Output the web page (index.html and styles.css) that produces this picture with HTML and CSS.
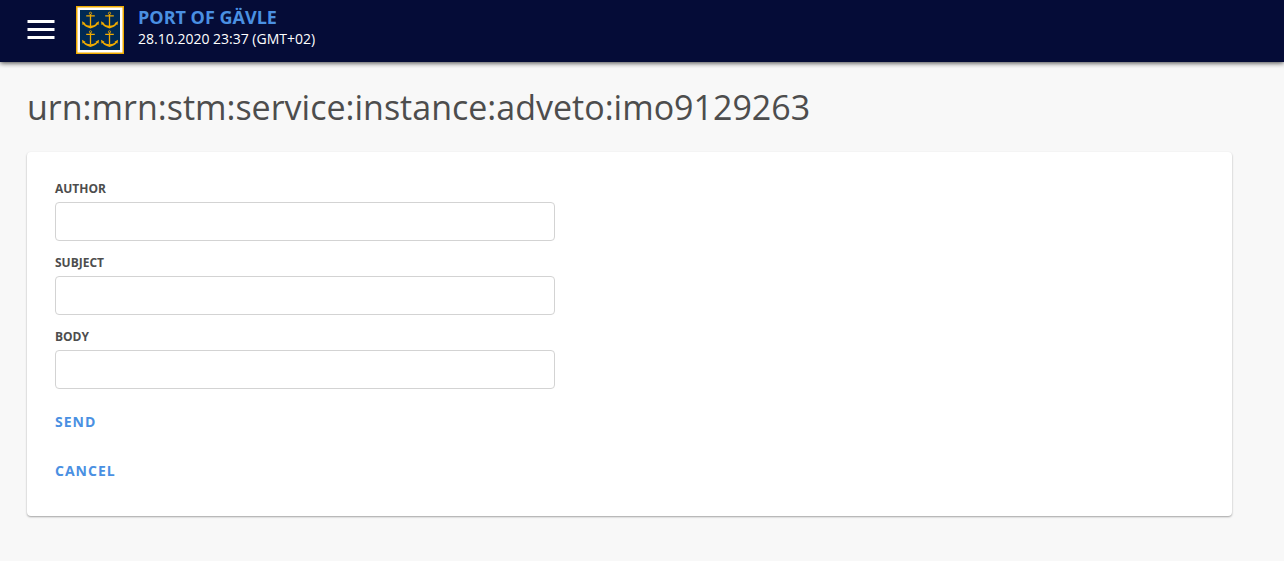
FILE: index.html
```html
<!DOCTYPE html>
<html lang="en">
<head>
<meta charset="utf-8">
<meta name="viewport" content="width=device-width, initial-scale=1">
<title>Port of Gävle</title>
<link rel="stylesheet" href="styles.css">
</head>
<body>
<header class="topbar">
  <button class="menu-button" type="button" aria-label="Menu">
    <svg class="menu-icon" viewBox="0 0 28 20" aria-hidden="true">
      <path d="M0.5 1.5h27M0.5 9.5h27M0.5 17.5h27" stroke="#fff" stroke-width="3" fill="none"/>
    </svg>
  </button>
  <svg class="logo" viewBox="0 0 48 48" aria-hidden="true">
    <defs>
      <g id="anchor">
        <circle cx="9" cy="2.3" r="1.1" fill="none" stroke="#f0ab00" stroke-width="0.8"/>
        <path d="M9 3.2V15M4.7 4.8h8.6" fill="none" stroke="#f0ab00" stroke-width="1.3"/>
        <path d="M0.5 10.2L4 12.2L3.2 12.7C4.6 14 6.5 14.7 9 14.7S13.4 14 14.8 12.7L14 12.2L17.5 10.2L17 14L16 13.5C14.4 15.8 11.5 16.5 9 17.6C6.5 16.5 3.6 15.8 2 13.5L1 14Z" fill="#f0ab00"/>
      </g>
    </defs>
    <rect width="48" height="48" fill="#f0ab00"/>
    <rect x="1.5" y="1.5" width="45" height="45" fill="#fff"/>
    <rect x="4" y="4" width="40" height="40" fill="#002a54"/>
    <use href="#anchor" x="5.5" y="5"/>
    <use href="#anchor" x="24.5" y="5"/>
    <use href="#anchor" x="5.5" y="23.5"/>
    <use href="#anchor" x="24.5" y="23.5"/>
  </svg>
  <div class="brand">
    <span class="brand-name">PORT OF GÄVLE</span>
    <time class="brand-time" datetime="2020-10-28T23:37+02:00">28.10.2020 23:37 (GMT+02)</time>
  </div>
</header>
<main class="page">
  <h1 class="page-title">urn:mrn:stm:service:instance:adveto:imo9129263</h1>
  <form class="card">
    <div class="field">
      <label class="field-label" for="author">AUTHOR</label>
      <input class="field-input" id="author" type="text">
    </div>
    <div class="field">
      <label class="field-label" for="subject">SUBJECT</label>
      <input class="field-input" id="subject" type="text">
    </div>
    <div class="field">
      <label class="field-label" for="body">BODY</label>
      <input class="field-input" id="body" type="text">
    </div>
    <div class="actions">
      <button class="action" type="button">SEND</button>
      <button class="action" type="button">CANCEL</button>
    </div>
  </form>
</main>
</body>
</html>
```

FILE: styles.css
```css
* {
  box-sizing: border-box;
}

body {
  margin: 0;
  background: #f8f8f8;
  color: #4d4d4d;
  font-family: "Open Sans", sans-serif;
  font-size: 14px;
}

.topbar {
  display: flex;
  align-items: flex-start;
  padding: 6px 27px 8px;
  background: #050c37;
  box-shadow: 0 1px 5px rgba(0, 0, 0, 0.75);
}

.menu-button {
  align-self: center;
  margin: 0 21px 0 0;
  padding: 0;
  border: 0;
  background: none;
  cursor: pointer;
}

.menu-icon {
  display: block;
  width: 28px;
  height: 20px;
}

.logo {
  width: 48px;
  height: 48px;
  margin-right: 14px;
}

.brand {
  display: flex;
  flex-direction: column;
  color: #fff;
}

.brand-name {
  color: #4a90e2;
  font-size: 18px;
  font-weight: 700;
  line-height: 22px;
}

.brand-time {
  line-height: 22px;
}

.page {
  padding: 21px 52px 44px 27px;
}

.page-title {
  margin: 0 0 21px;
  font-size: 34px;
  font-weight: 400;
  line-height: 48px;
}

.card {
  padding: 28px;
  border-radius: 4px;
  background: #fff;
  box-shadow: 0 1px 2px rgba(0, 0, 0, 0.35);
}

.field {
  display: flex;
  flex-direction: column;
  gap: 5px;
  max-width: 500px;
  margin-bottom: 13px;
}

.field-label {
  font-size: 12px;
  font-weight: 700;
  line-height: 17px;
}

.field-input {
  width: 100%;
  height: 39px;
  padding: 0 10px;
  border: 1px solid #d3d3d3;
  border-radius: 4px;
  background: #fff;
  color: inherit;
  font: inherit;
}

.actions {
  display: flex;
  flex-direction: column;
  align-items: flex-start;
  gap: 14px;
  padding-top: 2px;
}

.action {
  height: 35px;
  padding: 0;
  border: 0;
  background: none;
  color: #4a90e2;
  font: inherit;
  font-weight: 700;
  letter-spacing: 1px;
  cursor: pointer;
}
```
